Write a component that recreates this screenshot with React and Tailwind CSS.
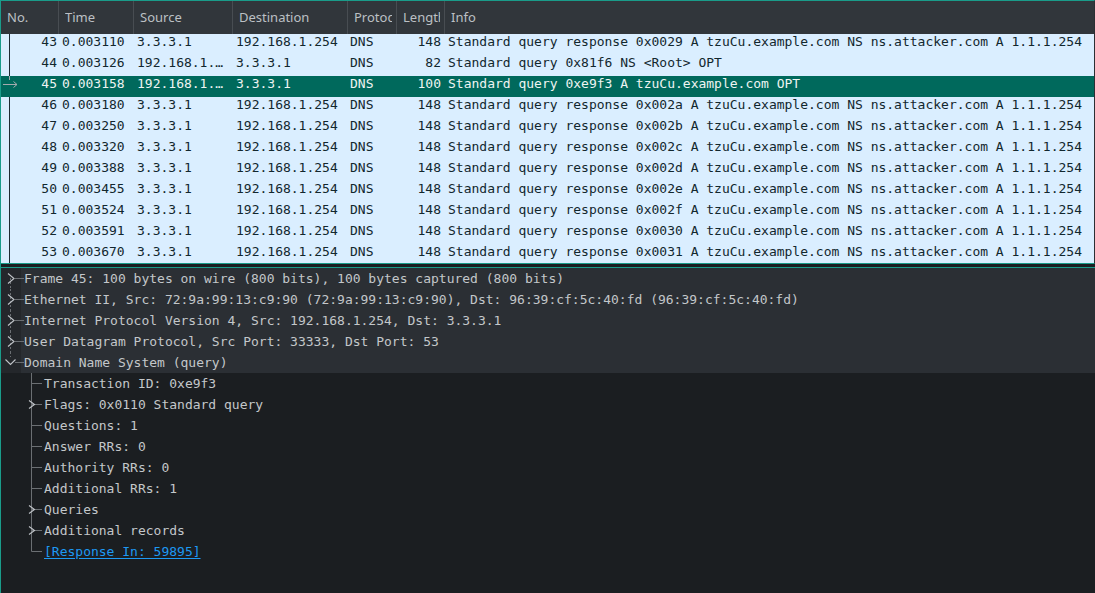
const COLS = [
  { label: 'No.', w: 'w-[58px]' },
  { label: 'Time', w: 'w-[75px]' },
  { label: 'Source', w: 'w-[99px]' },
  { label: 'Destination', w: 'w-[115px]' },
  { label: 'Protocol', w: 'w-[49px]' },
  { label: 'Length', w: 'w-[48px]' },
];

const resp = id => `Standard query response ${id} A tzuCu.example.com NS ns.attacker.com A 1.1.1.254`;

const PACKETS = [
  [43, '0.003110', '3.3.3.1', '192.168.1.254', 148, resp('0x0029')],
  [44, '0.003126', '192.168.1.…', '3.3.3.1', 82, 'Standard query 0x81f6 NS <Root> OPT'],
  [45, '0.003158', '192.168.1.…', '3.3.3.1', 100, 'Standard query 0xe9f3 A tzuCu.example.com OPT'],
  [46, '0.003180', '3.3.3.1', '192.168.1.254', 148, resp('0x002a')],
  [47, '0.003250', '3.3.3.1', '192.168.1.254', 148, resp('0x002b')],
  [48, '0.003320', '3.3.3.1', '192.168.1.254', 148, resp('0x002c')],
  [49, '0.003388', '3.3.3.1', '192.168.1.254', 148, resp('0x002d')],
  [50, '0.003455', '3.3.3.1', '192.168.1.254', 148, resp('0x002e')],
  [51, '0.003524', '3.3.3.1', '192.168.1.254', 148, resp('0x002f')],
  [52, '0.003591', '3.3.3.1', '192.168.1.254', 148, resp('0x0030')],
  [53, '0.003670', '3.3.3.1', '192.168.1.254', 148, resp('0x0031')],
];

const TREE = [
  { level: 0, exp: 'closed', text: 'Frame 45: 100 bytes on wire (800 bits), 100 bytes captured (800 bits)' },
  { level: 0, exp: 'closed', text: 'Ethernet II, Src: 72:9a:99:13:c9:90 (72:9a:99:13:c9:90), Dst: 96:39:cf:5c:40:fd (96:39:cf:5c:40:fd)' },
  { level: 0, exp: 'closed', text: 'Internet Protocol Version 4, Src: 192.168.1.254, Dst: 3.3.3.1' },
  { level: 0, exp: 'closed', text: 'User Datagram Protocol, Src Port: 33333, Dst Port: 53' },
  { level: 0, exp: 'open', text: 'Domain Name System (query)', last: true },
  { level: 1, text: 'Transaction ID: 0xe9f3' },
  { level: 1, exp: 'closed', text: 'Flags: 0x0110 Standard query' },
  { level: 1, text: 'Questions: 1' },
  { level: 1, text: 'Answer RRs: 0' },
  { level: 1, text: 'Authority RRs: 0' },
  { level: 1, text: 'Additional RRs: 1' },
  { level: 1, exp: 'closed', text: 'Queries' },
  { level: 1, exp: 'closed', text: 'Additional records' },
  { level: 1, text: '[Response In: 59895]', last: true, link: true },
];

const mono = { fontFamily: '"DejaVu Sans Mono", monospace' };
const LINE = '#6b6f73';
const CHEV = '#c0c4c8';

// tree gutter: lines + expander, coordinates relative to the pane's left edge
function TreeGutter({ level, exp, last, first }) {
  if (level === 0) {
    return (
      <svg width="23" height="21" className="shrink-0">
        <line x1="9.5" y1={first ? 10 : 0} x2="9.5" y2={last ? 5 : 21} stroke={LINE} strokeDasharray="2 2" />
        <line x1="14" y1="10.5" x2="23" y2="10.5" stroke={LINE} />
        {exp === 'open' ? (
          <path d="M4.5 7.5 L9.5 12.5 L14.5 7.5" fill="none" stroke={CHEV} strokeWidth="1.1" />
        ) : (
          <path d="M7 5.5 L13 10.5 L7 15.5" fill="none" stroke={CHEV} strokeWidth="1.1" />
        )}
      </svg>
    );
  }
  return (
    <svg width="43" height="21" className="shrink-0">
      <line x1="30.5" y1="0" x2="30.5" y2={last ? 10.5 : 21} stroke={LINE} />
      <line x1="30.5" y1="10.5" x2="41" y2="10.5" stroke={LINE} />
      {exp && <path d="M28 6.5 L33.5 10.5 L28 14.5" fill="none" stroke={CHEV} strokeWidth="1.1" />}
    </svg>
  );
}

export default function App() {
  return (
    <div className="w-[1095px] h-[593px] overflow-hidden bg-[#1b1e21] flex flex-col border-l border-[#1a9c8a]">
      {/* packet list */}
      <div className="h-[264px] shrink-0 flex flex-col border-t border-b border-r border-t-[#1a9c8a] border-b-[#1a9c8a] border-r-[#2b2f33] overflow-hidden">
        <div
          className="h-[33px] shrink-0 flex bg-[#31363b] text-[#bcc0c4] text-[13px]"
          style={{ fontFamily: '"Noto Sans", sans-serif' }}
        >
          {COLS.map(c => (
            <div key={c.label} className={`${c.w} shrink-0 border-r border-[#484d52] pl-[6px] pr-[4px] flex items-center`}>
              <div className="flex-1 min-w-0 overflow-hidden whitespace-nowrap">{c.label}</div>
            </div>
          ))}
          <div className="flex-1 pl-[6px] flex items-center">Info</div>
        </div>
        <div className="flex-1 overflow-hidden bg-[#daeeff] text-[13px]" style={mono}>
          {PACKETS.map(([no, time, src, dst, len, info]) => {
            const sel = no === 45;
            return (
              <div
                key={no}
                className={`h-[21px] flex leading-[13px] whitespace-nowrap ${sel ? 'bg-[#00695c] text-[#eef4f2]' : 'text-[#12272e]'}`}
              >
                <div className="w-[58px] shrink-0 flex pr-[2px]">
                  <svg width="18" height="21" className="shrink-0">
                    {sel ? (
                      <g stroke="#a5aaae" fill="none">
                        <line x1="8.5" y1="0" x2="8.5" y2="4" />
                        <line x1="2" y1="8.5" x2="16" y2="8.5" />
                        <path d="M12.5 5.5 L16 8.5 L12.5 11.5" />
                      </g>
                    ) : (
                      <line x1="8.5" y1="0" x2="8.5" y2="21" stroke="#1e2a33" />
                    )}
                  </svg>
                  <span className="flex-1 text-right pt-[1px]">{no}</span>
                </div>
                <div className="w-[75px] shrink-0 pl-[3px] pt-[1px]">{time}</div>
                <div className="w-[99px] shrink-0 pl-[3px] pt-[1px]">{src}</div>
                <div className="w-[115px] shrink-0 pl-[3px] pt-[1px]">{dst}</div>
                <div className="w-[49px] shrink-0 pl-[2px] pt-[1px]">DNS</div>
                <div className="w-[48px] shrink-0 pr-[4px] text-right pt-[1px]">{len}</div>
                <div className="flex-1 pl-[3px] pt-[1px]">{info}</div>
              </div>
            );
          })}
        </div>
      </div>

      <div className="h-[3px] shrink-0" />

      {/* packet details */}
      <div className="flex-1 border-t border-[#1a9c8a] text-[13px] text-[#c3c7ca]" style={mono}>
        {TREE.map((r, i) => (
          <div
            key={i}
            className={`h-[21px] flex items-center whitespace-nowrap leading-[21px] ${
              r.level === 0 ? 'bg-[linear-gradient(to_right,#24272b_20px,#2b2f34_20px)]' : ''
            }`}
          >
            <TreeGutter level={r.level} exp={r.exp} last={r.last} first={i === 0} />
            {r.link ? (
              <span className="text-[#1d99f3] underline underline-offset-2">{r.text}</span>
            ) : (
              <span>{r.text}</span>
            )}
          </div>
        ))}
      </div>
    </div>
  );
}
